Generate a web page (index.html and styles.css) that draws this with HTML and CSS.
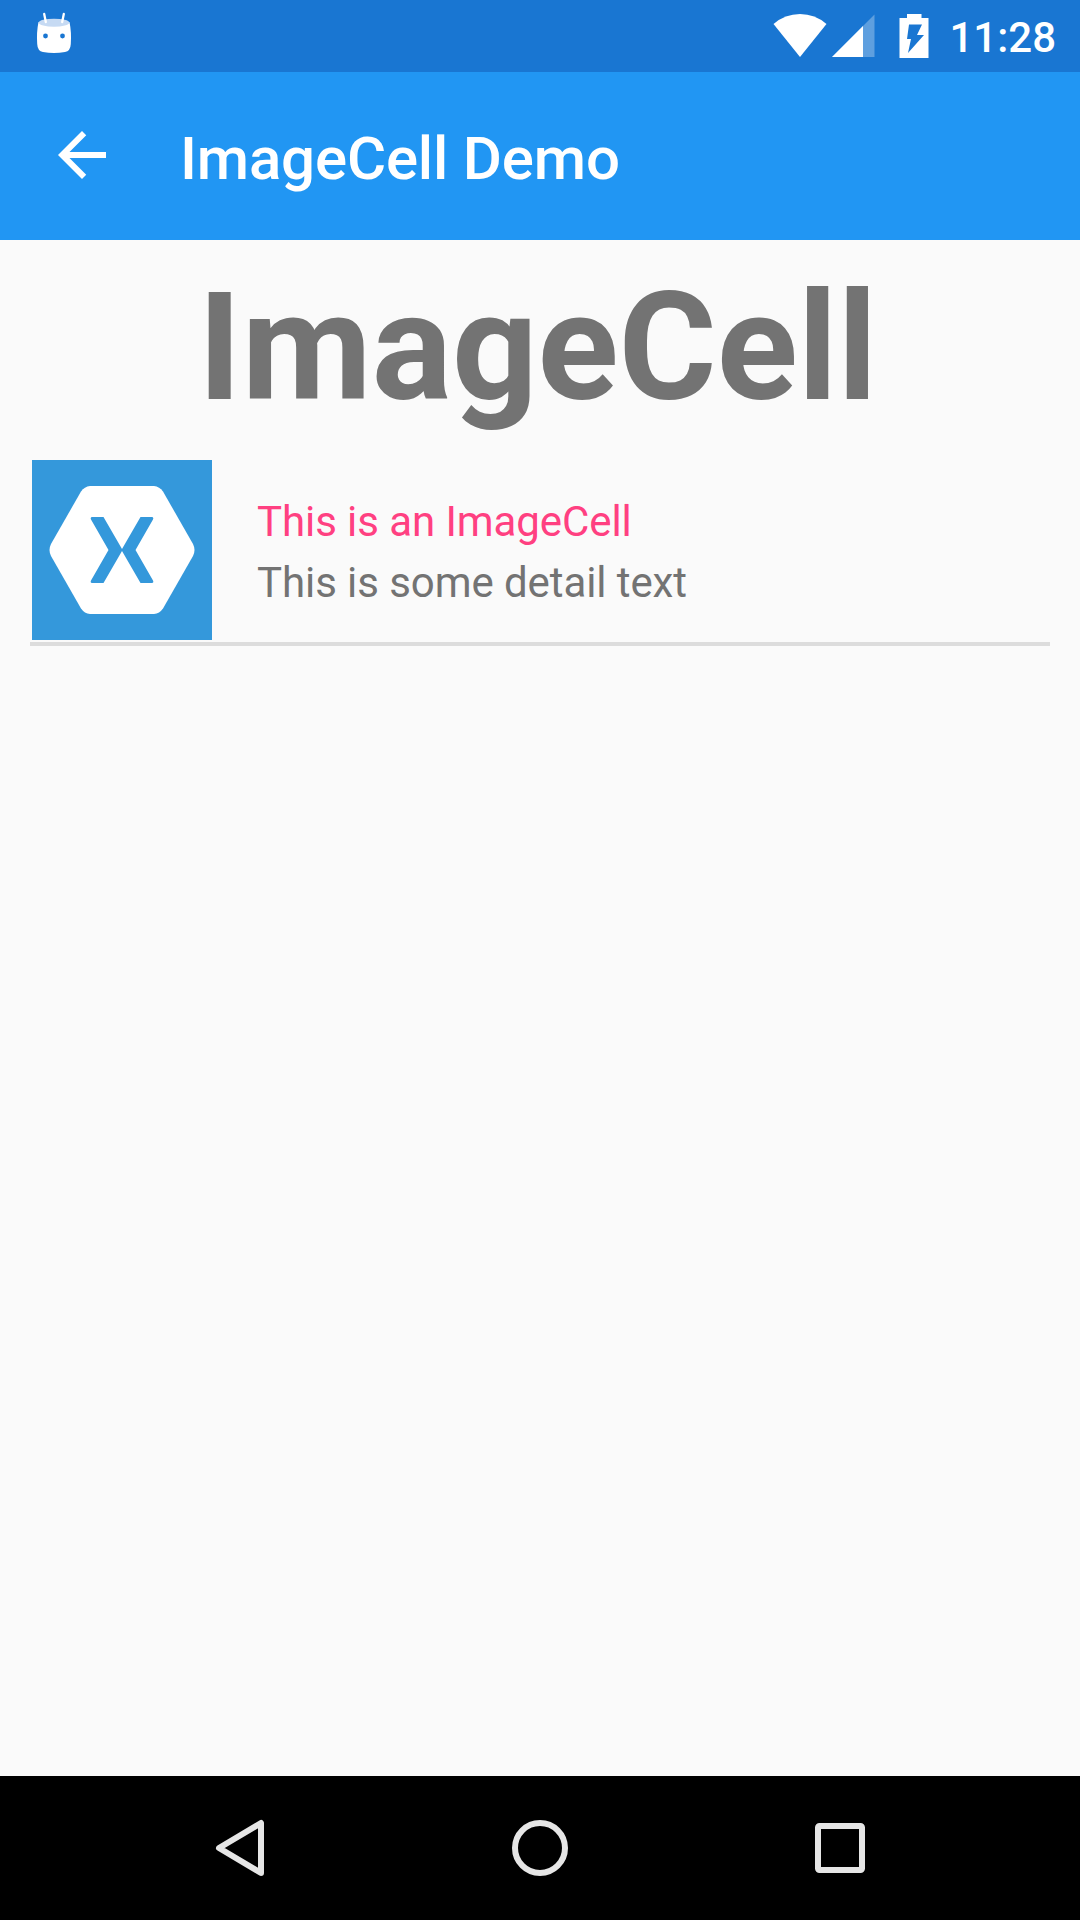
FILE: index.html
```html
<!DOCTYPE html>
<html lang="en">
<head>
<meta charset="utf-8">
<title>ImageCell Demo</title>
<link rel="stylesheet" href="styles.css">
</head>
<body>
<div class="screen">
  <div class="status-bar">
    <svg class="debug-icon" viewBox="0 0 36 42" aria-hidden="true">
      <path d="M8.2 2l1.600 8M27.800 2l-1.600 8" stroke="#fff" stroke-width="2.300" stroke-linecap="round"/>
      <path d="M2.500 10Q18 16 33.500 10Q35.600 20 34.800 32Q34.500 39 29 40Q18 42 7 40Q1.500 39 1.200 32Q.4 20 2.500 10Z" fill="#fff"/>
      <ellipse cx="18" cy="10.700" rx="15.200" ry="4" fill="#c6daf3"/>
      <path d="M9.400 8l.4 2M26.600 8l-.4 2" stroke="#fff" stroke-width="2.300" stroke-linecap="round"/>
      <circle cx="9.500" cy="24" r="2.400" fill="#1976d2"/>
      <circle cx="26.500" cy="24" r="2.400" fill="#1976d2"/>
    </svg>
    <div class="status-right">
      <svg class="wifi-icon" viewBox="0 0 54 44" aria-hidden="true">
        <path d="M.5 10Q12 0 27 0T53.500 10L27 43Z" fill="#fff"/>
      </svg>
      <svg class="signal-icon" viewBox="0 0 43 44" aria-hidden="true">
        <path d="M42.500 .500V43H0Z" fill="#fff" fill-opacity=".3"/>
        <path d="M31 12V43H0Z" fill="#fff"/>
      </svg>
      <svg class="battery-icon" viewBox="0 0 30 44" aria-hidden="true">
        <path fill-rule="evenodd" d="M8 0H22.500V4H29.500V44H.5V4H8ZM10 10.500L8 25H12L9 39L25 21H18L23 10.500Z" fill="#fff"/>
      </svg>
      <span class="clock">11:28</span>
    </div>
  </div>
  <header class="app-bar">
    <svg class="back-icon" viewBox="0 0 24 24" aria-hidden="true">
      <path d="M20 11H7.830l5.590-5.590L12 4l-8 8 8 8 1.410-1.410L7.830 13H20v-2z" fill="#fff"/>
    </svg>
    <span class="app-title">ImageCell Demo</span>
  </header>
  <main class="content">
    <h1 class="heading">ImageCell</h1>
    <div class="cell">
      <svg class="cell-image" viewBox="0 0 180 180" aria-hidden="true">
        <rect width="180" height="180" fill="#3498db"/>
        <path d="M58 26H122Q127.500 26.500 131 31.500L161 84Q164 90 161 96L131 148.500Q127.500 153.500 122 154H58Q52.500 153.500 49 148.500L19 96Q16 90 19 84L49 31.500Q52.500 26.500 58 26Z" fill="#fff"/>
        <path d="M60 57H71.500L90 89L108.500 57H120Q122 57.500 121 59.500L103.500 90L121 120.500Q122 122.500 120 123H108.500L90 91L71.500 123H60Q58 122.500 59 120.500L76.500 90L59 59.500Q58 57.500 60 57Z" fill="#3498db"/>
      </svg>
      <div class="cell-text">
        <span class="cell-title">This is an ImageCell</span>
        <span class="cell-detail">This is some detail text</span>
      </div>
    </div>
  </main>
  <nav class="nav-bar">
    <svg class="nav-icon" viewBox="0 0 60 60" aria-hidden="true">
      <path d="M51 5V55L9 30Z"/>
    </svg>
    <svg class="nav-icon" viewBox="0 0 60 60" aria-hidden="true">
      <circle cx="30" cy="30" r="25"/>
    </svg>
    <svg class="nav-icon" viewBox="0 0 60 60" aria-hidden="true">
      <rect x="8" y="8" width="44" height="44" rx="1.500"/>
    </svg>
  </nav>
</div>
</body>
</html>
```

FILE: styles.css
```css
* {
  box-sizing: border-box;
}

body {
  margin: 0;
  font-family: Roboto, sans-serif;
}

svg {
  display: block;
  flex: none;
}

.screen {
  display: flex;
  flex-direction: column;
  width: 1080px;
  height: 1920px;
  background: #fafafa;
}

.status-bar {
  display: flex;
  justify-content: space-between;
  height: 72px;
  padding: 12px 24px 0 36px;
  background: #1976d2;
}

.debug-icon {
  width: 36px;
  height: 42px;
}

.status-right {
  display: flex;
  align-items: flex-start;
  padding-top: 2px;
}

.wifi-icon {
  width: 54px;
  height: 44px;
  margin-right: 5px;
}

.signal-icon {
  width: 43px;
  height: 44px;
  margin-right: 24px;
}

.battery-icon {
  width: 30px;
  height: 44px;
  margin-right: 20px;
}

.clock {
  font-size: 42px;
  font-weight: 500;
  line-height: 47px;
  color: #fff;
}

.app-bar {
  display: flex;
  align-items: flex-start;
  height: 168px;
  padding: 47px 46px 0;
  background: #2196f3;
}

.back-icon {
  width: 72px;
  height: 72px;
}

.app-title {
  margin-left: 62px;
  padding-top: 5px;
  font-size: 60px;
  font-weight: 500;
  line-height: 70px;
  letter-spacing: -0.17px;
  color: #fff;
}

.content {
  flex: 1;
  padding: 20px 30px 0;
}

.heading {
  margin: 0;
  padding-right: 5px;
  font-size: 150px;
  font-weight: 700;
  line-height: 176px;
  text-align: center;
  color: #737373;
}

.cell {
  display: flex;
  height: 190px;
  margin-top: 20px;
  padding: 4px 2px 0;
  border-bottom: 4px solid #dcdcdc;
}

.cell-image {
  width: 180px;
  height: 180px;
}

.cell-text {
  display: flex;
  flex-direction: column;
  padding: 31px 0 0 45px;
  font-size: 42px;
  line-height: 61px;
  letter-spacing: -0.08px;
}

.cell-title {
  color: #ff4081;
}

.cell-detail {
  color: #737373;
}

.nav-bar {
  display: flex;
  justify-content: space-between;
  align-items: center;
  height: 144px;
  padding: 0 210px;
  background: #000;
}

.nav-icon {
  width: 60px;
  height: 60px;
  fill: none;
  stroke: #e6e6e6;
  stroke-width: 6;
  stroke-linejoin: round;
}
```
